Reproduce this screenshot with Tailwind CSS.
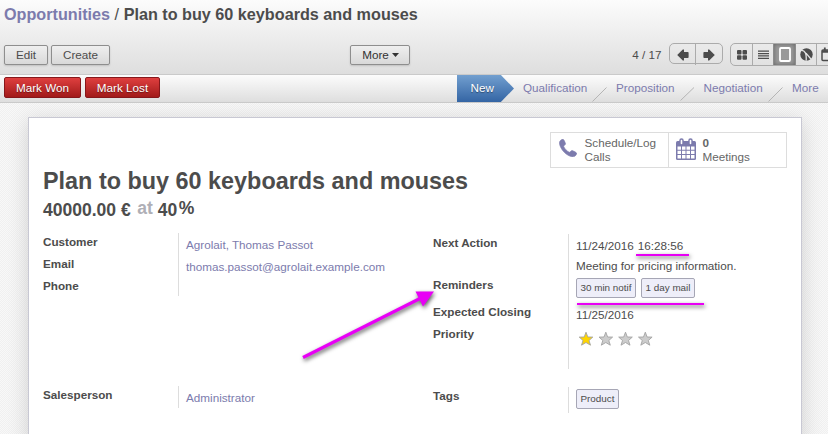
<!DOCTYPE html>
<html lang="en">
<head>
<meta charset="utf-8">
<title>Opportunities</title>
<script src="https://cdn.jsdelivr.net/npm/@tailwindcss/browser@4"></script>
</head>
<body class="w-[828px] h-[434px] overflow-hidden relative text-[11.7px] leading-[18px] text-[#4c4c4c] bg-[#f1f1f1] font-['Liberation_Sans',Arial,sans-serif]">
<header class="h-[75px] border-b border-[#cacaca] bg-linear-to-b from-[#fcfcfc] to-[#dedede] overflow-hidden">
  <h1 class="h-[43px] pl-1 pt-[4px] text-[16.2px] leading-[20px] font-bold whitespace-nowrap"><span class="text-[#7c7bad]">Opportunities</span><span class="font-normal"> / </span>Plan to buy 60 keyboards and mouses</h1>
  <div class="w-[860px] flex items-start">
    <div class="flex gap-[3px] pl-1 pt-[2px] w-[350px]">
      <button class="w-[44px] h-5 rounded-[2px] border border-[#8e8e8e] bg-linear-to-b from-[#efefef] to-[#d9d9d9] shadow-[0_1px_2px_rgba(0,0,0,.15)]">Edit</button>
      <button class="w-[59px] h-5 rounded-[2px] border border-[#8e8e8e] bg-linear-to-b from-[#efefef] to-[#d9d9d9] shadow-[0_1px_2px_rgba(0,0,0,.15)]">Create</button>
    </div>
    <button class="mt-[2px] w-[60px] h-5 flex items-center justify-center gap-[3px] rounded-[2px] border border-[#8e8e8e] bg-linear-to-b from-[#efefef] to-[#d9d9d9] text-[#333] shadow-[0_1px_2px_rgba(0,0,0,.15)]"><span class="ml-px">More</span><svg width="7" height="4" viewBox="0 0 7 4"><path d="M0 0h7L3.500 4z" fill="#333"/></svg></button>
    <div class="w-[251.5px] pt-[3px] text-right">4 / 17</div>
    <div class="ml-[7.5px] w-[54px] h-[21px] flex rounded-[5px] border border-[#ababab]">
      <div class="w-[26px] h-[21px] flex justify-center pt-[5px] border-r border-[#ababab]"><svg width="12" height="12" viewBox="0 0 12 12"><path d="M.2 6 5.800.6 7 .6v2.400h3.800q.8 0 .8.800v4.400q0 .8-.8.800H7v2.400H5.800z" fill="#4c4c4c"/></svg></div>
      <div class="w-[26px] flex justify-center pt-[5px]"><svg width="12" height="12" viewBox="0 0 12 12"><path d="M11.800 6 6.200.6 5 .6v2.400H1.200q-.8 0-.8.800v4.400q0 .8.800.8H5v2.400h1.200z" fill="#4c4c4c"/></svg></div>
    </div>
    <div class="ml-[7px] w-[110px] h-[23px] flex rounded-[5px] border border-[#ababab] overflow-hidden">
      <div class="w-[22px] flex items-center justify-center border-r border-[#ababab]"><svg width="10" height="10" viewBox="0 0 10 10" fill="#4c4c4c"><rect width="4.500" height="4.500" rx="1"/><rect x="5.500" width="4.500" height="4.500" rx="1"/><rect y="5.300" width="4.500" height="4.500" rx="1"/><rect x="5.500" y="5.300" width="4.500" height="4.500" rx="1"/></svg></div>
      <div class="w-[21px] flex items-center justify-center border-r border-[#8c8c8c]"><svg width="11" height="9" viewBox="0 0 11 9" fill="#4c4c4c"><path d="M0 .5h11v1.200H0zM0 3h11v1.200H0zM0 5.300h11v1.200H0zM0 7.800h11v1.200H0z"/></svg></div>
      <div class="w-[22px] flex items-center justify-center border-r border-[#8c8c8c] bg-[#999] shadow-[inset_0_0_4px_rgba(0,0,0,.35)]"><svg width="12" height="15" viewBox="0 0 12 15"><rect x="1" y="1" width="10" height="13" rx="1" fill="#999" stroke="#fff" stroke-width="1.800"/></svg></div>
      <div class="w-[21px] flex items-center justify-center border-r border-[#ababab]"><svg width="13" height="13" viewBox="0 0 13 13"><circle cx="6.500" cy="6.500" r="6.200" fill="#4c4c4c"/><path d="M1 2.200C5.500 3 6.500 5 6.200 12.800M6 5.200 11.300 11.500" stroke="#e2e2e2" stroke-width="1.300" fill="none"/></svg></div>
      <div class="w-[20px] pl-[4px] pt-[3px]"><svg width="13" height="15" viewBox="0 0 13 15" fill="none" stroke="#4c4c4c" stroke-width="1.500"><rect x="1" y="3" width="11" height="10.500" rx="1"/><path d="M1 4.500h11" stroke-width="2.500"/><path d="M3.800.5v3M9.500.5v3" stroke-width="1.800"/></svg></div>
    </div>
  </div>
</header>
<div class="h-7 flex border-b border-[#cacaca] bg-linear-to-b from-[#fcfcfc] to-[#dedede] overflow-hidden">
  <div class="w-[457px] flex gap-1 pl-1 pt-[2px]">
    <button class="w-[77px] h-[21px] rounded-[2px] border border-[#86171b] bg-linear-to-b from-[#df3f3f] to-[#a21a1a] text-white [text-shadow:0_1px_1px_rgba(0,0,0,.4)]">Mark Won</button>
    <button class="w-[75px] h-[21px] rounded-[2px] border border-[#86171b] bg-linear-to-b from-[#df3f3f] to-[#a21a1a] text-white [text-shadow:0_1px_1px_rgba(0,0,0,.4)]">Mark Lost</button>
  </div>
  <div class="w-[57px] h-[27px] pl-[13.500px] leading-[26px] text-white bg-linear-to-b from-[#729fcf] to-[#3465a4] [clip-path:polygon(0_0,77%_0,100%_50%,77%_100%,0_100%)] [text-shadow:0_1px_1px_rgba(0,0,0,.4)]">New</div>
  <div class="flex text-[#7c7bad] leading-[26px] whitespace-nowrap">
    <div class="w-[93px] pl-[9px] flex">Qualification</div>
    <div class="w-[88px] pl-[9px]">Proposition</div>
    <div class="w-[88px] pl-[8.5px]">Negotiation</div>
    <div class="w-[45px] pl-[9px]">More</div>
  </div>
  <svg class="absolute left-[590px] top-[75px]" width="196" height="27" viewBox="0 0 196 27" fill="none" stroke="#b5b5b5"><path d="M2.500 26.500 16.500 12.500M90.500 25.500 104 12.500M178.500 26.500 192.500 12.500"/></svg>
</div>
<main class="pt-[14px] pl-[28px] h-[331px] bg-[conic-gradient(#f8f8f8_25%,#f0f0f0_0_50%,#f8f8f8_0_75%,#f0f0f0_0)] bg-size-[2px_2px]">
  <section class="w-[774px] h-[330px] bg-white border border-[#c8c8d3] shadow-[0_4px_20px_rgba(0,0,0,.15)] pl-[14px] pt-[14px]">
    <div class="ml-[507px] w-[237px] h-[36px] flex border border-[#ddd] leading-[14px] text-[#666]">
      <div class="w-[118px] flex border-r border-[#ddd] pt-[4px] pl-[8px]">
        <svg class="mt-[2px]" width="18" height="18" viewBox="0 0 18 18"><path d="M.5 3.500C.7 1.600 2.500.5 4 .3c.7 0 2 2.800 2.500 4.400.2.900-1.900 2-1.800 2.800.5 1.800 3.500 4.900 5.500 5.800 1 .3 1.900-1.800 2.900-1.700 1.200.3 4 1.800 4.400 2.400.3 1.500-1.200 3.300-2.900 3.600C8.500 18.500.2 9.500.5 3.500z" fill="#7c7bad" stroke="#7c7bad" stroke-width=".7"/></svg>
        <div class="ml-[7.5px] mt-[-1px]">Schedule/Log<br>Calls</div>
      </div>
      <div class="flex pt-[4px] pl-[7px]">
        <svg class="mt-[1px]" width="20" height="22" viewBox="0 0 20 22"><rect y="3" width="20" height="19" rx="1.500" fill="#7c7bad"/><path d="M1.500 8.500h3.500v3.300H1.500zM6 8.500h3.500v3.300H6zM10.500 8.500H14v3.300h-3.500zM15 8.500h3.500v3.300H15zM1.500 12.800h3.500v3.300H1.500zM6 12.800h3.500v3.300H6zM10.500 12.800H14v3.300h-3.500zM15 12.800h3.500v3.300H15zM1.500 17.100h3.500v3.300H1.500zM6 17.100h3.500v3.300H6zM10.500 17.100H14v3.300h-3.500zM15 17.100h3.500v3.300H15z" fill="#fff"/><path d="M5.500 2.500v3M14.500 2.500v3" stroke="#7c7bad" stroke-width="4.500" stroke-linecap="round"/><path d="M5.500 2.500v3M14.500 2.500v3" stroke="#fff" stroke-width="1.600" stroke-linecap="round"/></svg>
        <div class="ml-[6.5px] mt-[-1px]"><b>0</b><br>Meetings</div>
      </div>
    </div>
    <h2 class="text-[23.400px] leading-[27px] font-bold">Plan to buy 60 keyboards and mouses</h2>
    <div class="flex text-[17.550px] leading-[20px] font-bold h-[38px] pt-[5px] whitespace-pre"><span>40000.00 €</span><span class="ml-[6.5px] mt-[-2px] text-[#afafb6]">at</span><span class="ml-[5px]">40</span><span class="ml-[1.5px] mt-[-2px]">%</span></div>
    <div class="flex">
      <div class="w-[390px]">
        <div class="flex h-[153px]">
          <div class="w-[135px] font-bold leading-[22px] -mt-[2px]">Customer<br>Email<br>Phone</div>
          <div class="h-[63px] border-l border-[#ddd] pl-[7px] leading-[22px] pt-px text-[#7c7bad]">Agrolait, Thomas Passot<br>thomas.passot@agrolait.example.com</div>
        </div>
        <div class="flex">
          <b class="w-[135px] leading-[18px]">Salesperson</b>
          <div class="h-[22px] border-l border-[#ddd] pl-[7px] leading-[22px] pt-px text-[#7c7bad]">Administrator</div>
        </div>
      </div>
      <div>
        <div class="flex h-[154px] pt-[1px]">
          <div class="w-[135px] font-bold"><div class="h-[42px]">Next Action</div><div class="h-[27px]">Reminders</div><div class="h-[22px]">Expected Closing</div><div>Priority</div></div>
          <div class="h-[135px] border-l border-[#ddd] pl-[7px] pt-[3px]">
            <div class="h-[20px] [word-spacing:1px]">11/24/2016 16:28:56</div>
            <div class="h-[21px]">Meeting for pricing information.</div>
            <div class="flex h-[28px] gap-[5px] text-[9.900px]"><span class="w-[60px] h-[20px] text-center rounded-[2px] border border-[#a6a6b5] bg-[#eeeef9] leading-[18px]">30 min notif</span><span class="w-[54px] h-[20px] text-center rounded-[2px] border border-[#a6a6b5] bg-[#eeeef9] leading-[18px]">1 day mail</span></div>
            <div class="h-[24px] [word-spacing:1px]">11/25/2016</div>
            <svg class="ml-[2px]" width="78" height="18" viewBox="0 0 78 18" stroke="#a3a3a3" stroke-width=".9"><defs><path id="star" d="M8 2.200 9.800 7 14.800 7.100 11 10.500 12.500 15.200 8 12.500 3.500 15.200 5 10.500 1.200 7.100 6.200 7z"/></defs><use href="#star" fill="#ffd500"/><use href="#star" x="19.800" fill="#ccc"/><use href="#star" x="39.500" fill="#ccc"/><use href="#star" x="59.300" fill="#ccc"/></svg>
          </div>
        </div>
        <div class="flex">
          <b class="w-[135px]">Tags</b>
          <div class="h-[26px] border-l border-[#ddd] pl-[7px] pt-[2px]"><span class="block w-[43px] h-[20px] text-center text-[9.900px] rounded-[2px] border border-[#a6a6b5] bg-[#eeeef9] leading-[18px]">Product</span></div>
        </div>
      </div>
    </div>
  </section>
</main>
<svg class="absolute inset-0 [filter:drop-shadow(1px_2px_2px_rgba(0,0,0,.65))]" width="828" height="434" viewBox="0 0 828 434" fill="none" stroke="#e800f5"><path d="M303 357.500 420 298.500" stroke-width="3.200"/><path d="M415.500 291.500 434 291.500 423 306.500z" fill="#e800f5" stroke="none"/><path d="M636 255h53M577 304h127" stroke-width="2"/></svg>
</body>
</html>
